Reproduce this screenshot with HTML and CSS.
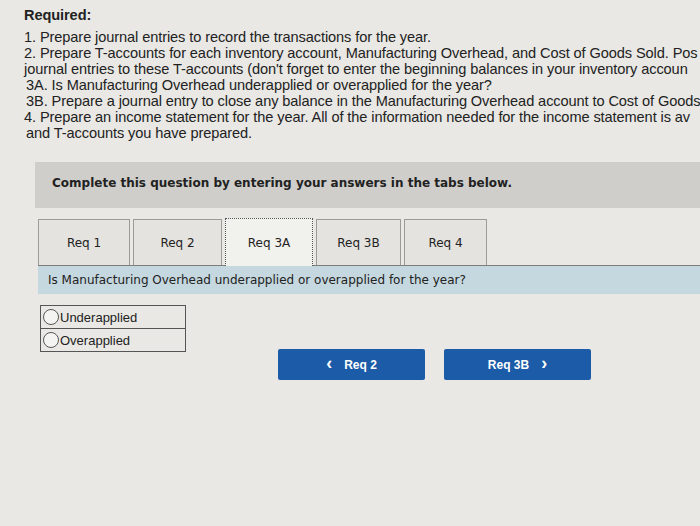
FILE: index.html
```html
<!DOCTYPE html>
<html>
<head>
  <meta charset="UTF-8">
  <title>Required</title>
  <link rel="stylesheet" href="styles.css">
</head>
<body>
  <div class="required">
    <div class="req-title">Required:</div>
    <div class="line">1. Prepare journal entries to record the transactions for the year.</div>
    <div class="line">2. Prepare T-accounts for each inventory account, Manufacturing Overhead, and Cost of Goods Sold. Pos</div>
    <div class="line">journal entries to these T-accounts (don't forget to enter the beginning balances in your inventory accoun</div>
    <div class="line indent">3A. Is Manufacturing Overhead underapplied or overapplied for the year?</div>
    <div class="line indent">3B. Prepare a journal entry to close any balance in the Manufacturing Overhead account to Cost of Goods</div>
    <div class="line">4. Prepare an income statement for the year. All of the information needed for the income statement is av</div>
    <div class="line indent">and T-accounts you have prepared.</div>
  </div>

  <div class="instructions">Complete this question by entering your answers in the tabs below.</div>

  <div class="tabs">
    <div class="tab tab-1">Req 1</div>
    <div class="tab tab-2">Req 2</div>
    <div class="tab tab-3a active">Req 3A</div>
    <div class="tab tab-3b">Req 3B</div>
    <div class="tab tab-4">Req 4</div>
  </div>
  <div class="question">Is Manufacturing Overhead underapplied or overapplied for the year?</div>

  <table class="choices">
    <tr><td><span class="radio"></span>Underapplied</td></tr>
    <tr><td><span class="radio"></span>Overapplied</td></tr>
  </table>

  <div class="nav">
    <button class="nav-btn"><span class="arrow">&lsaquo;</span>Req 2</button>
    <button class="nav-btn">Req 3B<span class="arrow right">&rsaquo;</span></button>
  </div>
</body>
</html>
```

FILE: styles.css
```css
body {
  margin: 0;
  background: #e9e8e4;
  color: #222;
  font-family: "Liberation Sans", Arial, sans-serif;
  overflow: hidden;
  width: 700px;
  height: 526px;
}
.required {
  padding: 7px 0 0 24px;
  font-size: 14.6px;
  letter-spacing: -0.1px;
}
.req-title {
  font-weight: bold;
  line-height: 17px;
  margin-bottom: 5px;
}
.line {
  white-space: nowrap;
  line-height: 16px;
}
.line.indent {
  padding-left: 2px;
}
.instructions {
  margin: 21px 0 0 35px;
  height: 46px;
  line-height: 42px;
  padding-left: 17px;
  background: #cfcecb;
  font-family: "DejaVu Sans", Verdana, sans-serif;
  font-size: 12px;
  font-weight: bold;
  white-space: nowrap;
}
.tabs {
  display: flex;
  gap: 3px;
  margin: 11px 0 0 38px;
  height: 46px;
  border-bottom: 1px solid #7d7d7b;
  font-family: "DejaVu Sans", Verdana, sans-serif;
  font-size: 12px;
}
.tab {
  display: flex;
  align-items: center;
  justify-content: center;
  background: #e4e3df;
  border: 1px solid #9c9b98;
  border-bottom: none;
  box-sizing: border-box;
}
.tab-1 { width: 92px; }
.tab-2 { width: 89px; }
.tab-3a { width: 88px; }
.tab-3b { width: 85px; }
.tab-4 { width: 83px; }
.tab.active {
  background: #f1f1ee;
  border: 1px dotted #555;
  border-bottom: none;
  height: 48px;
  margin-top: -1px;
  position: relative;
  z-index: 1;
}
.question {
  margin-left: 38px;
  height: 28px;
  line-height: 28px;
  padding-left: 10px;
  background: #c5d8df;
  font-family: "DejaVu Sans", Verdana, sans-serif;
  font-size: 12px;
}
.choices {
  margin: 11px 0 0 40px;
  border-collapse: collapse;
  width: 146px;
  font-size: 13px;
}
.choices td {
  border: 1px solid #555;
  height: 22px;
  padding: 0 0 0 2px;
  white-space: nowrap;
}
.radio {
  display: inline-block;
  width: 14px;
  height: 14px;
  border: 1px solid #555;
  border-radius: 50%;
  vertical-align: -3px;
  margin-right: 1px;
  background: #f4f4f2;
}
.nav {
  display: flex;
  gap: 19px;
  margin: -3px 0 0 278px;
}
.nav-btn {
  width: 147px;
  height: 31px;
  background: #1b5ba7;
  color: #fff;
  border: none;
  border-radius: 2px;
  font-family: "Liberation Sans", Arial, sans-serif;
  font-size: 12px;
  font-weight: bold;
  display: flex;
  align-items: center;
  justify-content: center;
  padding: 0;
}
.arrow {
  font-size: 18px;
  margin: -2px 12px 0 0;
}
.arrow.right {
  margin: -2px 0 0 12px;
}
```
